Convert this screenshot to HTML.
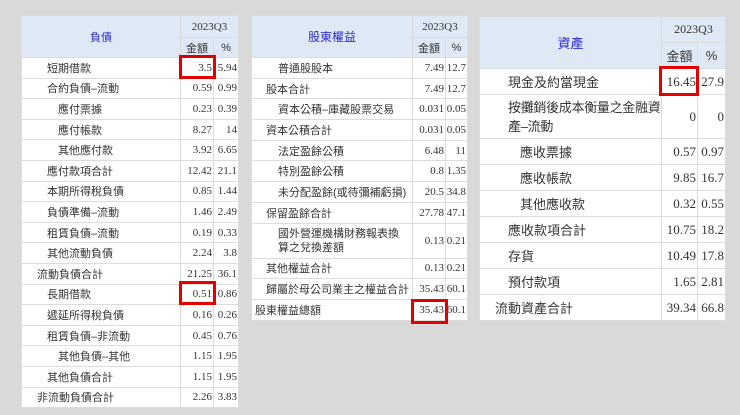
<!DOCTYPE html>
<html><head><meta charset="utf-8"><style>
body{margin:0;width:740px;height:415px;background:#d9d9d9;position:relative;overflow:hidden;font-family:"Liberation Sans","Noto Sans CJK TC",sans-serif;color:#333}
table{position:absolute;border-collapse:collapse;background:#fff;table-layout:fixed}
td{border:1px solid #dcdcdc;padding:0;white-space:nowrap;overflow:visible}
td.h{background:#dfe9f5;text-align:center;color:#2a2acc}
td.n{text-align:right;font-family:"Liberation Serif","Noto Serif CJK SC",serif;padding-right:1px}
td.h.y{font-family:"Liberation Serif",serif;color:#333}
td.h.k{color:#333}
.l0{padding-left:15px}.l1{padding-left:25px}.l2{padding-left:36px}
.box{position:absolute;border:3px solid #e50000;box-sizing:border-box}
#t1{left:21px;top:15px;width:217px;font-size:11px}
#t1 tr{height:20.6px}
#t2{left:251px;top:15px;width:216px;font-size:11px}
#t2 tr{height:20.7px}
#t2 .l0{padding-left:3px}#t2 .l1{padding-left:14px}#t2 .l2{padding-left:26px}
#t3{left:479px;top:16px;width:246px;font-size:13px}
#t3 tr{height:26px}
#t3 .l0{padding-left:15px}#t3 .l1{padding-left:28px}#t3 .l2{padding-left:40px}
</style></head><body>
<table id="t1">
<col style="width:159px"><col style="width:33px"><col style="width:25px">
<tr style="height:22px"><td class="h" rowspan="2">負債</td><td class="h y" colspan="2">2023Q3</td></tr>
<tr style="height:20px"><td class="h k">金額</td><td class="h k">%</td></tr>
<tr><td class="l1">短期借款</td><td class="n">3.5</td><td class="n">5.94</td></tr>
<tr><td class="l1">合約負債–流動</td><td class="n">0.59</td><td class="n">0.99</td></tr>
<tr><td class="l2">應付票據</td><td class="n">0.23</td><td class="n">0.39</td></tr>
<tr><td class="l2">應付帳款</td><td class="n">8.27</td><td class="n">14</td></tr>
<tr><td class="l2">其他應付款</td><td class="n">3.92</td><td class="n">6.65</td></tr>
<tr><td class="l1">應付款項合計</td><td class="n">12.42</td><td class="n">21.1</td></tr>
<tr><td class="l1">本期所得稅負債</td><td class="n">0.85</td><td class="n">1.44</td></tr>
<tr><td class="l1">負債準備–流動</td><td class="n">1.46</td><td class="n">2.49</td></tr>
<tr><td class="l1">租賃負債–流動</td><td class="n">0.19</td><td class="n">0.33</td></tr>
<tr><td class="l1">其他流動負債</td><td class="n">2.24</td><td class="n">3.8</td></tr>
<tr><td class="l0">流動負債合計</td><td class="n">21.25</td><td class="n">36.1</td></tr>
<tr><td class="l1">長期借款</td><td class="n">0.51</td><td class="n">0.86</td></tr>
<tr><td class="l1">遞延所得稅負債</td><td class="n">0.16</td><td class="n">0.26</td></tr>
<tr><td class="l1">租賃負債–非流動</td><td class="n">0.45</td><td class="n">0.76</td></tr>
<tr><td class="l2">其他負債–其他</td><td class="n">1.15</td><td class="n">1.95</td></tr>
<tr><td class="l1">其他負債合計</td><td class="n">1.15</td><td class="n">1.95</td></tr>
<tr><td class="l0">非流動負債合計</td><td class="n">2.26</td><td class="n">3.83</td></tr>
</table>
<div class="box" style="left:179px;top:55px;width:37px;height:24px"></div>
<div class="box" style="left:179px;top:281px;width:37px;height:24px"></div>

<table id="t2">
<col style="width:161px"><col style="width:33px"><col style="width:22px">
<tr style="height:22px"><td class="h" rowspan="2" style="font-size:12px">股東權益</td><td class="h y" colspan="2">2023Q3</td></tr>
<tr style="height:20px"><td class="h k">金額</td><td class="h k">%</td></tr>
<tr><td class="l2">普通股股本</td><td class="n">7.49</td><td class="n">12.7</td></tr>
<tr><td class="l1">股本合計</td><td class="n">7.49</td><td class="n">12.7</td></tr>
<tr><td class="l2">資本公積–庫藏股票交易</td><td class="n">0.031</td><td class="n">0.05</td></tr>
<tr><td class="l1">資本公積合計</td><td class="n">0.031</td><td class="n">0.05</td></tr>
<tr><td class="l2">法定盈餘公積</td><td class="n">6.48</td><td class="n">11</td></tr>
<tr><td class="l2">特別盈餘公積</td><td class="n">0.8</td><td class="n">1.35</td></tr>
<tr><td class="l2">未分配盈餘(或待彌補虧損)</td><td class="n">20.5</td><td class="n">34.8</td></tr>
<tr><td class="l1">保留盈餘合計</td><td class="n">27.78</td><td class="n">47.1</td></tr>
<tr style="height:35px"><td class="l2" style="white-space:normal;line-height:14px;padding-right:6px">國外營運機構財務報表換算之兌換差額</td><td class="n">0.13</td><td class="n">0.21</td></tr>
<tr><td class="l1">其他權益合計</td><td class="n">0.13</td><td class="n">0.21</td></tr>
<tr><td class="l1">歸屬於母公司業主之權益合計</td><td class="n">35.43</td><td class="n">60.1</td></tr>
<tr><td class="l0">股東權益總額</td><td class="n">35.43</td><td class="n">60.1</td></tr>
</table>
<div class="box" style="left:411px;top:299px;width:37px;height:25px"></div>

<table id="t3">
<col style="width:182px"><col style="width:36px"><col style="width:28px">
<tr style="height:26px"><td class="h" rowspan="2">資產</td><td class="h y" colspan="2" style="font-size:12px">2023Q3</td></tr>
<tr style="height:26px"><td class="h k">金額</td><td class="h k">%</td></tr>
<tr><td class="l1">現金及約當現金</td><td class="n">16.45</td><td class="n">27.9</td></tr>
<tr style="height:44px"><td class="l1" style="white-space:normal;line-height:19px;padding-right:0;letter-spacing:-0.3px">按攤銷後成本衡量之金融資產–流動</td><td class="n">0</td><td class="n">0</td></tr>
<tr><td class="l2">應收票據</td><td class="n">0.57</td><td class="n">0.97</td></tr>
<tr><td class="l2">應收帳款</td><td class="n">9.85</td><td class="n">16.7</td></tr>
<tr><td class="l2">其他應收款</td><td class="n">0.32</td><td class="n">0.55</td></tr>
<tr><td class="l1">應收款項合計</td><td class="n">10.75</td><td class="n">18.2</td></tr>
<tr><td class="l1">存貨</td><td class="n">10.49</td><td class="n">17.8</td></tr>
<tr><td class="l1">預付款項</td><td class="n">1.65</td><td class="n">2.81</td></tr>
<tr><td class="l0">流動資產合計</td><td class="n">39.34</td><td class="n">66.8</td></tr>
</table>
<div class="box" style="left:659px;top:66px;width:40px;height:30px"></div>
</body></html>
